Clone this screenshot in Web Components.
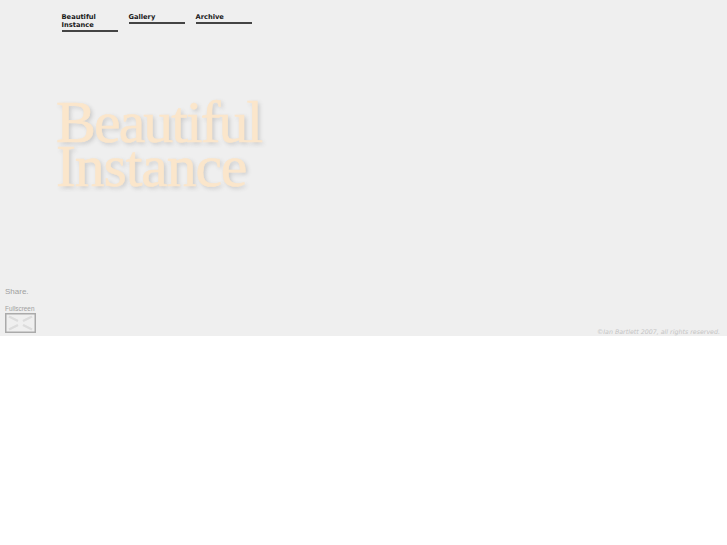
<!DOCTYPE html>
<html>
<head>
<meta charset="utf-8">
<title>Beautiful Instance</title>
<style>
  html, body { margin: 0; background: #fff; }
</style>
</head>
<body>
<site-stage>
  <site-nav slot="nav">
    <nav-item>Beautiful Instance</nav-item>
    <nav-item>Gallery</nav-item>
    <nav-item>Archive</nav-item>
  </site-nav>
  <big-title slot="title">Beautiful<br><span style="letter-spacing: -1.2px">Instance</span></big-title>
  <stage-tools slot="tools"></stage-tools>
  <site-credit slot="credit">©Ian Bartlett 2007, all rights reserved.</site-credit>
</site-stage>

<script>
// outer grey area, the rest of the page stays white
class SiteStage extends HTMLElement {
  constructor() {
    super();
    const shadow = this.attachShadow({mode: 'open'});
    shadow.innerHTML = `
      <style>
        :host {
          background: #efefef;
          display: flex;
          flex-direction: column;
          height: 336px;
          justify-content: space-between;
        }
        .bottom {
          align-items: flex-end;
          display: flex;
          justify-content: space-between;
          padding: 0 7px 3px 5px;
        }
      </style>
      <div class="top">
        <slot name="nav"></slot>
        <slot name="title"></slot>
      </div>
      <div class="bottom">
        <slot name="tools"></slot>
        <slot name="credit"></slot>
      </div>
    `;
  }
}

class SiteNav extends HTMLElement {
  constructor() {
    super();
    const shadow = this.attachShadow({mode: 'open'});
    shadow.innerHTML = `
      <style>
        :host {
          align-items: flex-start;
          display: flex;
          gap: 11px;
          padding: 13px 0 0 61.5px;
        }
      </style>
      <slot></slot>
    `;
  }
}

class NavItem extends HTMLElement {
  constructor() {
    super();
    const shadow = this.attachShadow({mode: 'open'});
    shadow.innerHTML = `
      <style>
        :host {
          border-bottom: 2px solid #444;
          box-sizing: border-box;
          color: #1a1a1a;
          display: block;
          font: bold 6.7px/8px "DejaVu Sans", sans-serif;
          padding-bottom: 1px;
          width: 56px;
        }
      </style>
      <slot></slot>
    `;
  }
}

// heading text with the soft shadow under it
class BigTitle extends HTMLElement {
  constructor() {
    super();
    const shadow = this.attachShadow({mode: 'open'});
    shadow.innerHTML = `
      <style>
        :host {
          -webkit-text-stroke: 0.6px #fbe6cb;
          color: #fbe6cb;
          display: block;
          font: 60px/44px "Liberation Serif", serif;
          letter-spacing: -2px;
          padding: 68px 0 0 56px;
          text-shadow: 2px 2px 4px #c8c8c8;
        }
      </style>
      <slot></slot>
    `;
  }
}

class StageTools extends HTMLElement {
  constructor() {
    super();
    const shadow = this.attachShadow({mode: 'open'});
    shadow.innerHTML = `
      <style>
        :host {
          color: #a0a0a0;
          display: block;
          font-family: "Liberation Sans", sans-serif;
        }
        .share { font-size: 8px; line-height: 10px; margin-bottom: 8px; }
        .full { font-size: 6.4px; line-height: 8px; }
        svg { display: block; }
      </style>
      <div class="share">Share.</div>
      <div class="full">Fullscreen</div>
      <svg width="31" height="20" viewBox="0 0 31 20">
        <rect x="0.75" y="0.75" width="29.5" height="18.5" fill="#efefef" stroke="#aaa" stroke-width="1.5"/>
        <path d="M4 3.5 L13 8 M27 3.5 L18 8 M4 16.5 L13 12 M27 16.5 L18 12" stroke="#dcdcdc" stroke-width="2.5" fill="none"/>
      </svg>
    `;
  }
}

class SiteCredit extends HTMLElement {
  constructor() {
    super();
    const shadow = this.attachShadow({mode: 'open'});
    shadow.innerHTML = `
      <style>
        :host {
          color: #c4c4c4;
          display: block;
          font: italic 6.3px/10px "DejaVu Sans", sans-serif;
          margin-bottom: -4px;
        }
      </style>
      <slot></slot>
    `;
  }
}

customElements.define('site-stage', SiteStage);
customElements.define('site-nav', SiteNav);
customElements.define('nav-item', NavItem);
customElements.define('big-title', BigTitle);
customElements.define('stage-tools', StageTools);
customElements.define('site-credit', SiteCredit);
</script>
</body>
</html>
